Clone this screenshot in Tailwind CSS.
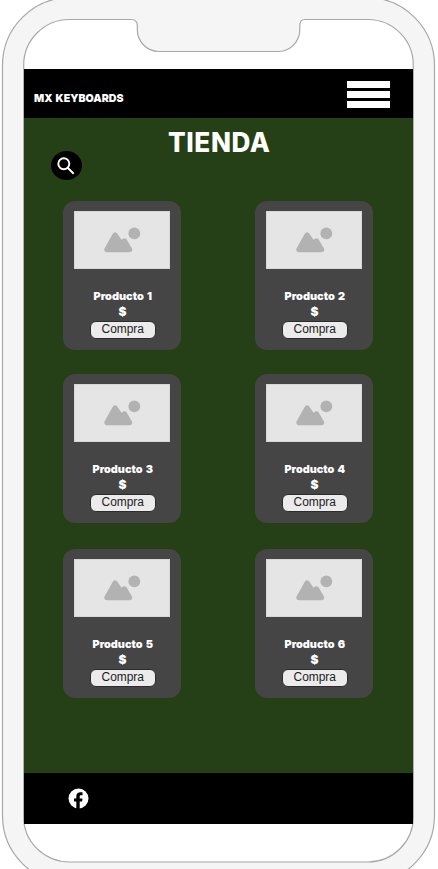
<!DOCTYPE html>
<html lang="es">
<head>
<meta charset="utf-8">
<meta name="viewport" content="width=device-width, initial-scale=1">
<title>MX Keyboards</title>
<script src="https://cdn.jsdelivr.net/npm/@tailwindcss/browser@4"></script>
</head>
<body class="bg-white">
<div class="relative h-[869px] w-[438px] overflow-hidden bg-white font-['Inter','Liberation_Sans',sans-serif]">
  <svg class="absolute inset-0" width="438" height="869" viewBox="0 0 438 869" fill="none" stroke="#a8a8a8" stroke-width="1.2">
    <rect x="2.5" y="-2.5" width="432" height="886" rx="68" fill="#f5f5f5"/>
    <path fill="#fff" d="M23.7 65 A46 45.5 0 0 1 70 19.5 H131 Q137 19.5 137.3 25 V29 A21.5 22 0 0 0 158.5 51.5 H279 A21.5 22 0 0 0 299.8 29 V25 Q300 19.5 305 19.5 H368 A45.5 45.5 0 0 1 413.3 65 V817 A45.5 45 0 0 1 368 862 H70 A46 45 0 0 1 23.7 817 Z"/>
  </svg>
  <main class="relative ml-6 mt-[69px] flex h-[755px] w-[389px] flex-col bg-[#253f17] text-white">
    <header class="flex h-[49px] items-start justify-between bg-black pl-[10px] pr-[23px] pt-3">
      <svg class="mt-[9px] h-4 w-24" viewBox="0 0 96 16"><text x="0" y="12" textLength="89.5" lengthAdjust="spacingAndGlyphs" fill="#fff" font-size="11" font-weight="900" word-spacing="1">MX KEYBOARDS</text></svg>
      <div class="flex w-[43px] flex-col gap-[3px]"><i class="h-[7px] bg-white"></i><i class="h-[7px] bg-white"></i><i class="h-[7px] bg-white"></i></div>
    </header>
    <h1 class="flex h-[33px] justify-center pt-2">
      <svg class="h-8 w-[104px]" viewBox="0 0 104 32"><text x="1" y="26" textLength="102.5" lengthAdjust="spacingAndGlyphs" fill="#fff" font-size="26.5" font-weight="800" letter-spacing="0.6">TIENDA</text></svg>
    </h1>
    <button class="ml-[27px] h-[29px] w-[31px] shrink-0 rounded-[50%] bg-black" aria-label="Buscar">
      <svg width="31" height="29" fill="none" stroke="#fff" stroke-width="1.9"><circle cx="12.8" cy="12.7" r="5.5"/><path d="m16.7 16.8 6 5.9"/></svg>
    </button>
    <section id="products" class="ml-[39px] mt-[21px] grid grid-cols-[118px_118px] grid-rows-[149px_24px_149px_26px_149px] gap-x-[74px]"></section>
    <footer class="mt-auto h-[51px] bg-black pl-[44px] pt-[15px]">
      <svg width="21" height="21" viewBox="0 0 21 21"><circle cx="10.5" cy="10.5" r="10" fill="#fff"/><path d="M8.3 21v-7.500H6v-3h2.300V8.500C8.300 5.500 10 4.300 12.500 4.300h2V7.200H13c-1 0-1.300.5-1.300 1.500v1.800h2.800l-.4 3h-2.400V21z" fill="#000"/></svg>
    </footer>
  </main>
</div>
<template id="card">
  <article class="flex flex-col items-center rounded-xl bg-[#454545] pt-[10px]">
    <div class="h-[58px] w-24 border border-[#d8d8d8] bg-[#e5e5e5]">
      <svg width="94" height="56" fill="#b2b2b2"><circle cx="59.3" cy="21.4" r="5.9"/><path d="M32 37.5 40 23.2 46 31.5 49.5 29 54.5 37.5z" stroke="#b2b2b2" stroke-width="5.4" stroke-linejoin="round"/></svg>
    </div>
    <svg class="mt-5 h-8 w-24" viewBox="0 0 96 32" fill="#fff" font-size="10.8" font-weight="900"><text class="name" y="11" lengthAdjust="spacingAndGlyphs" word-spacing="1"></text><text x="48.5" y="27" text-anchor="middle" font-size="12">$</text></svg>
    <button class="ml-px flex h-[18px] w-[66px] justify-center rounded-md border border-[#2c2c2c] bg-[#ebebeb]">
      <svg width="44" height="16"><text x="0.5" y="11" textLength="42.5" lengthAdjust="spacingAndGlyphs" fill="#1c1c1c" font-family="Liberation Sans, Arial, sans-serif" font-size="12">Compra</text></svg>
    </button>
  </article>
</template>
<script>
  const grid = document.getElementById('products');
  const template = document.getElementById('card');
  [[19.5,58.5],[18.5,60.5],[18.5,60.5],[18.5,60.5],[18.5,60.5],[18.5,60.5]].forEach(([x, width], i) => {
    const card = template.content.cloneNode(true);
    card.querySelector('article').style.gridRow = Math.floor(i / 2) * 2 + 1;
    const name = card.querySelector('.name');
    name.textContent = `Producto ${i + 1}`;
    name.setAttribute('x', x);
    name.setAttribute('textLength', width);
    grid.append(card);
  });
</script>
</body>
</html>
